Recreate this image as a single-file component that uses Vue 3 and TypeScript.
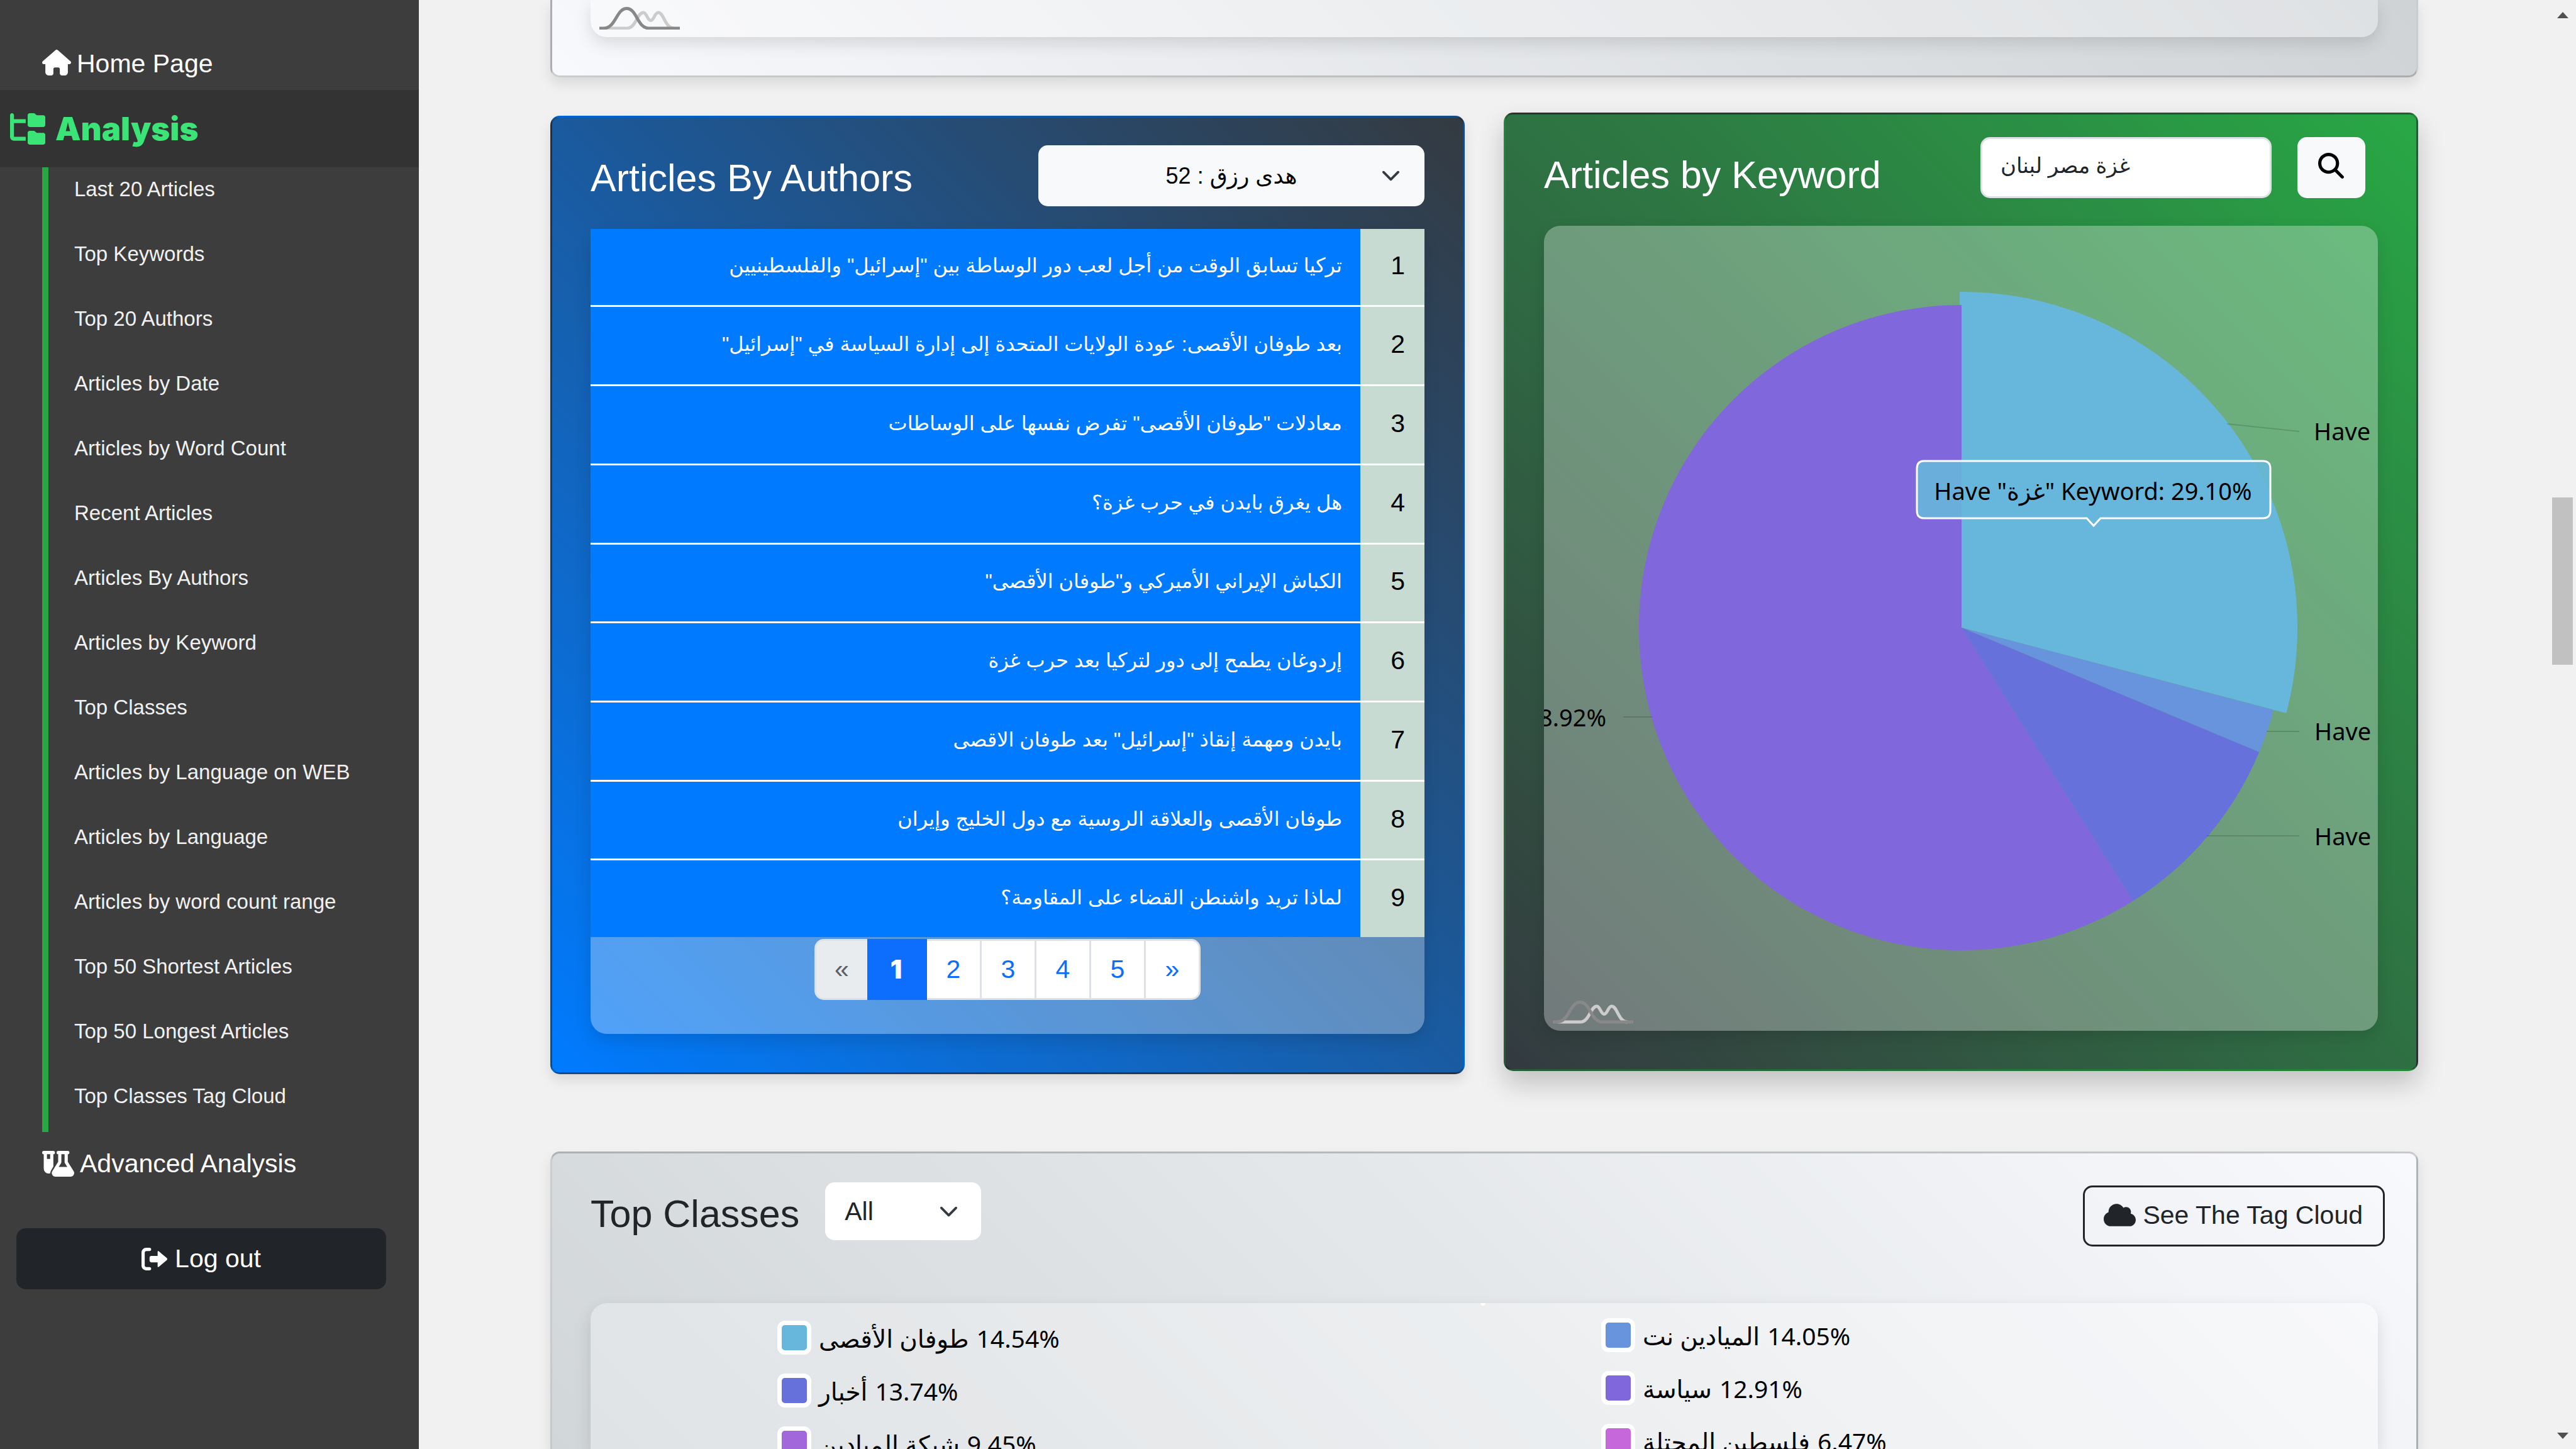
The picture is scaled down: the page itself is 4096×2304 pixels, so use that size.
<script setup lang="ts">
import { ref } from 'vue'

const sections: string[] = [
  'Last 20 Articles',
  'Top Keywords',
  'Top 20 Authors',
  'Articles by Date',
  'Articles by Word Count',
  'Recent Articles',
  'Articles By Authors',
  'Articles by Keyword',
  'Top Classes',
  'Articles by Language on WEB',
  'Articles by Language',
  'Articles by word count range',
  'Top 50 Shortest Articles',
  'Top 50 Longest Articles',
  'Top Classes Tag Cloud',
]

const articles: string[] = [
  'تركيا تسابق الوقت من أجل لعب دور الوساطة بين "إسرائيل" والفلسطينيين',
  'بعد طوفان الأقصى: عودة الولايات المتحدة إلى إدارة السياسة في "إسرائيل"',
  'معادلات "طوفان الأقصى" تفرض نفسها على الوساطات',
  'هل يغرق بايدن في حرب غزة؟',
  'الكباش الإيراني الأميركي و"طوفان الأقصى"',
  'إردوغان يطمح إلى دور لتركيا بعد حرب غزة',
  'بايدن ومهمة إنقاذ "إسرائيل" بعد طوفان الاقصى',
  'طوفان الأقصى والعلاقة الروسية مع دول الخليج وإيران',
  'لماذا تريد واشنطن القضاء على المقاومة؟',
]

interface Entry {
  name: string
  value: string
  color: string
}

const legend: Entry[][] = [
  [
    { name: 'طوفان الأقصى', value: '14.54%', color: '#67b7dc' },
    { name: 'أخبار', value: '13.74%', color: '#6771dc' },
    { name: 'شبكة الميادين', value: '9.45%', color: '#a367dc' },
  ],
  [
    { name: 'الميادين نت', value: '14.05%', color: '#6794dc' },
    { name: 'سياسة', value: '12.91%', color: '#8067dc' },
    { name: 'فلسطين المحتلة', value: '6.47%', color: '#c767dc' },
  ],
]

const keyword = ref('غزة مصر لبنان')
const author = ref('52')
const topClass = ref('all')

const logoLight =
  'M8 34H44C58 34 60 9 70 9C75 9 76.5 21.5 81.7 21.5C87 21.5 88 9 93.6 9C103 9 104 34 119 34'
const logoDark = 'M0 34H7C26 34 27 2.5 43.5 2.5C60 2.5 60 34 79 34H128'

const cx = 664
const cy = 639

function slice(from: number, to: number, r: number): string {
  const point = (share: number) => {
    const a = (share / 100) * Math.PI * 2
    return `${(cx + r * Math.sin(a)).toFixed(1)} ${(cy - r * Math.cos(a)).toFixed(1)}`
  }
  const large = to - from > 50 ? 1 : 0
  return `M${cx} ${cy}L${point(from)}A${r} ${r} 0 ${large} 1 ${point(to)}Z`
}

const slices = [
  { d: slice(-0.09, 29.1, 534), color: '#67b7dc' },
  { d: slice(29.1, 31.3, 513), color: '#6794dc' },
  { d: slice(31.3, 41.08, 513), color: '#6771dc' },
  { d: slice(41.08, 100, 513), color: '#8067dc' },
]
</script>

<template>
  <div class="app">
    <nav class="sidebar">
      <a class="nav-link home" href="#">
        <svg class="icon home-icon" viewBox="0 0 576 512"><path d="M575.8 255.5c0 18-15 32.1-32 32.1h-32l.7 160.2c0 35.300-21.500 64.200-56.500 64.200H392c-22.100 0-40-17.900-40-40v-88c0-17.700-14.300-32-32-32h-64c-17.700 0-32 14.300-32 32v88c0 22.100-17.900 40-40 40h-56c-35.300 0-63.900-28.700-63.900-64V287.600H32c-18 0-32-14-32-32.100 0-9 3-17 10-24L266.400 8c7-7 15-8 22-8s15 2 21 7l255.400 224.500c8 7 12 15 11 24z"/></svg>
        Home Page
      </a>
      <a class="nav-link analysis" href="#">
        <svg class="icon tree-icon" viewBox="0 0 576 512"><path d="M64 32C64 14.3 49.7 0 32 0S0 14.3 0 32v352c0 35.3 28.7 64 64 64h192v-64H64V160h192V96H64V32zM288 192c0 17.7 14.3 32 32 32h224c17.7 0 32-14.3 32-32V64c0-17.7-14.3-32-32-32h-98.700c-8.500 0-16.600-3.400-22.600-9.400L409.400 9.400c-6-6-14.100-9.400-22.600-9.400H320c-17.700 0-32 14.300-32 32v160zM288 480c0 17.700 14.300 32 32 32h224c17.700 0 32-14.300 32-32V352c0-17.700-14.300-32-32-32h-98.700c-8.500 0-16.600-3.400-22.600-9.400l-13.300-13.300c-6-6-14.100-9.400-22.600-9.400H320c-17.700 0-32 14.300-32 32v160z"/></svg>
        Analysis
      </a>
      <ul class="sections">
        <li v-for="s in sections" :key="s"><a href="#">{{ s }}</a></li>
      </ul>
      <a class="nav-link advanced" href="#">
        <svg class="icon flask-icon" viewBox="0 0 640 512"><path fill-rule="evenodd" d="M32 0H224A32 32 0 0 1 224 64V310L180 388Q160 420 160 448Q148 450 128 450A96 96 0 0 1 32 354V64A32 32 0 0 1 32 0ZM96 64V160H160V64ZM320 0H512A32 32 0 0 1 512 64V215L630 406Q640 424 640 442A70 70 0 0 1 570 512H262A70 70 0 0 1 192 442Q192 424 202 406L320 215V64A32 32 0 0 1 320 0ZM384 64V215Q384 233 374 249L330 320H502L458 249Q448 233 448 215V64Z"/></svg>
        Advanced Analysis
      </a>
      <button class="logout" type="button">
        <svg class="icon out-icon" viewBox="0 0 512 448"><path d="M160 448c17.700 0 32-14.300 32-32s-14.300-32-32-32H96c-17.700 0-32-14.300-32-32V96c0-17.700 14.300-32 32-32h64c17.700 0 32-14.300 32-32S177.700 0 160 0H96C43 0 0 43 0 96v256c0 53 43 96 96 96h64zM505 242L345 377c-12 10-25 7-25-9v-80H192c-17.700 0-32-14.300-32-32v-64c0-17.700 14.300-32 32-32h128V80c0-16 13-19 25-9l160 135c9 9 9 27 0 36z"/></svg>
        Log out
      </button>
    </nav>

    <main class="content">
      <section class="card previous">
        <div class="panel">
          <svg class="logo" viewBox="0 0 129 36"><path class="logo-light" :d="logoLight"/><path class="logo-dark" :d="logoDark"/></svg>
        </div>
      </section>

      <div class="row">
        <section class="card authors">
          <header class="card-head">
            <h2>Articles By Authors</h2>
            <select v-model="author" class="select author-select" aria-label="Author">
              <option value="52">هدى رزق : 52</option>
            </select>
          </header>
          <div class="panel authors-panel">
            <table>
              <tbody>
                <tr v-for="(title, i) in articles" :key="i">
                  <th scope="row">{{ i + 1 }}</th>
                  <td><a href="#">{{ title }}</a></td>
                </tr>
              </tbody>
            </table>
            <div class="pages">
              <button type="button" class="disabled" disabled>«</button>
              <button type="button" class="active">1</button>
              <button v-for="n in 4" :key="n" type="button">{{ n + 1 }}</button>
              <button type="button">»</button>
            </div>
          </div>
        </section>

        <section class="card keyword raised">
          <header class="card-head">
            <h2>Articles by Keyword</h2>
            <form class="search" @submit.prevent>
              <input v-model="keyword" type="text" aria-label="Keywords" />
              <button type="submit" aria-label="Search">
                <svg class="icon search-icon" viewBox="0 0 512 512"><path d="M416 208c0 45.900-14.900 88.300-40 122.700l126.600 126.700c12.500 12.500 12.500 32.800 0 45.300s-32.800 12.500-45.300 0L330.700 376c-34.400 25.200-76.800 40-122.700 40C93.100 416 0 322.900 0 208S93.100 0 208 0s208 93.100 208 208zM208 352a144 144 0 1 0 0-288 144 144 0 1 0 0 288z"/></svg>
              </button>
            </form>
          </header>
          <div class="panel">
            <svg class="pie" viewBox="0 0 1326 1280">
              <path v-for="s in slices" :key="s.color" :d="s.d" :fill="s.color" />
              <path class="tick" d="M1086 315L1201 327M1149 804H1201M1054 970H1201M126 781H172" />
              <text x="1224" y="341">Have</text>
              <text x="1225" y="818">Have</text>
              <text x="1225" y="985">Have</text>
              <text x="99" y="796" text-anchor="end">58.92%</text>
              <path class="tip" d="M604 374H1143Q1155 374 1155 386V453Q1155 465 1143 465H885L874 477L863 465H604Q593 465 593 453V386Q593 374 604 374Z" />
              <text x="873" y="436" text-anchor="middle">Have "غزة" Keyword: 29.10%</text>
              <g transform="translate(14 1232)"><path class="logo-light" :d="logoLight"/><path class="logo-dark" :d="logoDark"/></g>
            </svg>
          </div>
        </section>
      </div>

      <section class="card classes">
        <header class="card-head">
          <h2>Top Classes</h2>
          <select v-model="topClass" class="select class-select" aria-label="Class">
            <option value="all">All</option>
          </select>
          <button class="cloud" type="button">
            <svg class="icon cloud-icon" viewBox="0 0 640 448"><path d="M0 304c0 79.500 64.500 144 144 144h368c70.700 0 128-57.300 128-128 0-61.900-44-113.600-102.400-125.400 4.100-10.700 6.400-22.400 6.400-34.600 0-53-43-96-96-96-19.700 0-38.100 6-53.300 16.200C367 32.200 315.300 0 256 0 167.600 0 96 71.600 96 160c0 2.700.1 5.400.2 8.100C40.200 187.800 0 241.200 0 304z"/></svg>
            See The Tag Cloud
          </button>
        </header>
        <div class="panel legend">
          <ul v-for="(column, c) in legend" :key="c">
            <li v-for="entry in column" :key="entry.name">
              <i class="swatch" :style="{ background: entry.color }"></i>
              <span dir="rtl">{{ entry.name }}</span>
              <span>{{ entry.value }}</span>
            </li>
          </ul>
          <i class="marker"></i>
        </div>
      </section>
    </main>

    <div class="scrollbar" aria-hidden="true">
      <svg class="arrow" viewBox="0 0 18 10"><path d="M9 0L18 10H0Z"/></svg>
      <div class="thumb"></div>
      <svg class="arrow down" viewBox="0 0 18 10"><path d="M0 0H18L9 10Z"/></svg>
    </div>
  </div>
</template>

<style>
body {
  background: #f1f1f1;
}
</style>

<style scoped>
.app {
  display: flex;
  height: 100vh;
  overflow: hidden;
  background: #f1f1f1;
  color: #212529;
  font: 41px/61px "Liberation Sans", Arial, "DejaVu Sans", sans-serif;
}
.app * {
  box-sizing: border-box;
}
a {
  color: inherit;
  text-decoration: none;
}
button,
input,
select {
  font: inherit;
  color: inherit;
  margin: 0;
}
ul {
  list-style: none;
  margin: 0;
  padding: 0;
}
.icon {
  display: block;
  flex: none;
  fill: currentColor;
}

.sidebar {
  flex: none;
  display: flex;
  flex-direction: column;
  width: 666px;
  background: #3d3d3d;
  color: #fff;
}
.nav-link {
  display: flex;
  align-items: center;
  gap: 9px;
  padding-left: 67px;
}
.home {
  align-items: flex-start;
  height: 143px;
  padding-top: 59px;
  line-height: 84px;
}
.home-icon {
  width: 46px;
  height: 41px;
  margin-top: 20px;
}
.analysis {
  gap: 16px;
  height: 123px;
  padding-left: 16px;
  background: #333;
  color: #3be477;
  font-family: Inter, "Liberation Sans", sans-serif;
  font-size: 51px;
  font-weight: 900;
}
.tree-icon {
  width: 56px;
  height: 50px;
}
.sections {
  display: flex;
  flex-direction: column;
  gap: 54px;
  margin-left: 67px;
  padding: 10px 0 33px 41px;
  border-left: 10px solid #28a745;
  color: #f1f1f1;
  font-size: 33px;
  line-height: 49px;
}
.sections a {
  display: block;
}
.advanced {
  height: 100px;
}
.flask-icon {
  width: 51px;
  height: 41px;
}
.logout {
  display: flex;
  align-items: center;
  justify-content: center;
  gap: 12px;
  height: 97px;
  margin: 53px 52px 0 26px;
  padding: 0;
  border: 0;
  border-radius: 15px;
  background: #212529;
  color: #fff;
}
.out-icon {
  width: 41px;
  height: 36px;
}

.content {
  flex: 1;
  min-width: 0;
  display: flex;
  flex-direction: column;
  padding: 0 213px 0 209px;
}
.card {
  padding: 0 61px 61px;
  border: 3px solid rgba(0, 0, 0, 0.176);
  border-radius: 15px;
  box-shadow: 0 10px 20px rgba(0, 0, 0, 0.1);
}
.panel {
  border-radius: 26px;
  background: rgba(255, 255, 255, 0.31);
  box-shadow: 0 10px 26px rgba(0, 0, 0, 0.12);
}
.previous {
  border-top: 0;
  border-radius: 0 0 15px 15px;
  background-image: linear-gradient(45deg, #f8f9fc, #cfd3d6);
}
.previous .panel {
  padding: 11px 14px 12px;
  border-radius: 0 0 26px 26px;
}
.logo {
  display: block;
  width: 129px;
  height: 36px;
}
.logo-light,
.logo-dark {
  fill: none;
  stroke: #ccc;
  stroke-width: 5px;
}
.logo-dark {
  stroke: #888;
}

.row {
  display: flex;
  gap: 62px;
  margin: 61px 0 123px;
}
.row .card {
  flex: 1;
  min-width: 0;
}
.card-head {
  display: flex;
  align-items: flex-start;
  height: 177px;
  padding-top: 36px;
}
h2 {
  margin: 24px 0 0;
  font-size: 61px;
  font-weight: 400;
  line-height: 73px;
  white-space: nowrap;
}
.authors {
  background-image: linear-gradient(45deg, #007bff, #343a40);
  color: #fff;
}
.keyword {
  background-image: linear-gradient(45deg, #343a40, #28a745);
  color: #fff;
}
.raised {
  transform: translateY(-5px);
  box-shadow: 0 20px 41px rgba(0, 0, 0, 0.2);
}
.select {
  appearance: none;
  border: 0;
  border-radius: 15px;
  background: #fff url("data:image/svg+xml,%3csvg xmlns='http://www.w3.org/2000/svg' viewBox='0 0 16 16'%3e%3cpath fill='none' stroke='%23343a40' stroke-linecap='round' stroke-linejoin='round' stroke-width='2' d='m2 5 6 6 6-6'/%3e%3c/svg%3e") no-repeat right 38px center / 31px;
}
.author-select {
  width: 614px;
  height: 97px;
  margin: 8px 0 0 auto;
  background-color: #f8f9fa;
  color: #000;
  font-size: 36px;
  text-align-last: center;
}
.authors-panel {
  height: 1280px;
}
table {
  width: 100%;
  height: 1126px;
  border-collapse: collapse;
  table-layout: fixed;
  direction: rtl;
}
th,
td {
  padding: 0 31px 4px;
  border-bottom: 3px solid #fff;
  font-weight: 400;
  text-align: right;
}
tr:last-child th,
tr:last-child td {
  border-bottom: 0;
}
th {
  width: 102px;
  background: #c7dbd2;
  color: #000;
}
td {
  padding-right: 29px;
  background: #007bff;
  font-size: 32px;
  white-space: nowrap;
}
.pages {
  display: flex;
  justify-content: center;
  padding-top: 3px;
}
.pages button {
  width: 87px;
  height: 97px;
  padding: 0;
  border: solid #dee2e6;
  border-width: 3px 3px 3px 0;
  background: #fff;
  color: #0d6efd;
}
.pages .disabled {
  width: 84px;
  border-width: 3px 0 3px 3px;
  border-radius: 15px 0 0 15px;
  background: #e9ecef;
  color: #5b6065;
}
.pages .active {
  width: 95px;
  border-color: #0d6efd;
  background: #0d6efd;
  color: #fff;
  font-family: Inter, "Liberation Sans", sans-serif;
  font-weight: 900;
}
.pages button:last-child {
  border-radius: 0 15px 15px 0;
}

.search {
  display: flex;
  gap: 41px;
  margin: 0 20px 0 auto;
}
.search input {
  width: 463px;
  height: 97px;
  padding: 0 29px 8px;
  border: 3px solid #dee2e6;
  border-radius: 15px;
  background: #fff;
  color: #212529;
  font-size: 34px;
}
.search button {
  display: flex;
  align-items: center;
  justify-content: center;
  width: 108px;
  height: 97px;
  padding: 0 2px 6px 0;
  border: 0;
  border-radius: 15px;
  background: #f8f9fa;
  color: #000;
}
.search-icon {
  width: 41px;
  height: 41px;
}
.pie {
  display: block;
  width: 100%;
  border-radius: 26px;
}
.pie text {
  fill: #000;
  font-family: "Noto Sans", "Open Sans", "DejaVu Sans", sans-serif;
  font-size: 38px;
}
.tick {
  fill: none;
  stroke: #000;
  stroke-opacity: 0.14;
  stroke-width: 2px;
}
.tip {
  fill: #67b7dc;
  fill-opacity: 0.9;
  stroke: #fff;
  stroke-width: 3px;
}

.classes {
  flex: 1;
  display: flex;
  flex-direction: column;
  min-height: 0;
  padding-bottom: 0;
  border-bottom: 0;
  border-radius: 15px 15px 0 0;
  background-image: linear-gradient(45deg, #d1d6d9, #f8f9fc);
}
.classes .card-head {
  flex: none;
  height: 238px;
}
.class-select {
  width: 248px;
  height: 92px;
  margin: 10px 0 0 41px;
  padding: 0 31px;
  background-position: right 36px center;
}
.cloud {
  display: flex;
  align-items: center;
  gap: 11px;
  height: 97px;
  margin: 15px -11px 0 auto;
  padding: 0 32px 3px 30px;
  border: 3px solid #212529;
  border-radius: 15px;
  background: none;
}
.cloud-icon {
  width: 51px;
  height: 36px;
}
.legend {
  position: relative;
  flex: 1;
  display: flex;
  min-height: 0;
  padding-left: 297px;
  overflow: hidden;
  border-radius: 26px 26px 0 0;
}
.legend ul {
  flex: none;
  width: 1310px;
  padding-top: 28px;
}
.legend ul + ul {
  width: auto;
  padding-top: 24px;
}
.legend li {
  display: flex;
  align-items: center;
  gap: 12px;
  height: 54px;
  margin-bottom: 30px;
  color: #000;
  font-family: "Noto Sans", "Open Sans", "DejaVu Sans", sans-serif;
  font-size: 39px;
  white-space: nowrap;
}
.swatch {
  width: 54px;
  height: 54px;
  border: 7px solid #fff;
  border-radius: 12px;
}
.marker {
  position: absolute;
  top: 0;
  left: calc(50% - 6px);
  width: 8px;
  height: 4px;
  border-radius: 0 0 4px 4px;
  background: #fff;
}

.scrollbar {
  flex: none;
  display: flex;
  flex-direction: column;
  align-items: center;
  width: 38px;
  padding: 19px 5px 16px 0;
}
.arrow {
  display: block;
  width: 18px;
  height: 10px;
  fill: #505050;
}
.thumb {
  width: 33px;
  height: 266px;
  margin-top: 762px;
  background: #c1c1c1;
}
.down {
  margin-top: auto;
}
</style>
